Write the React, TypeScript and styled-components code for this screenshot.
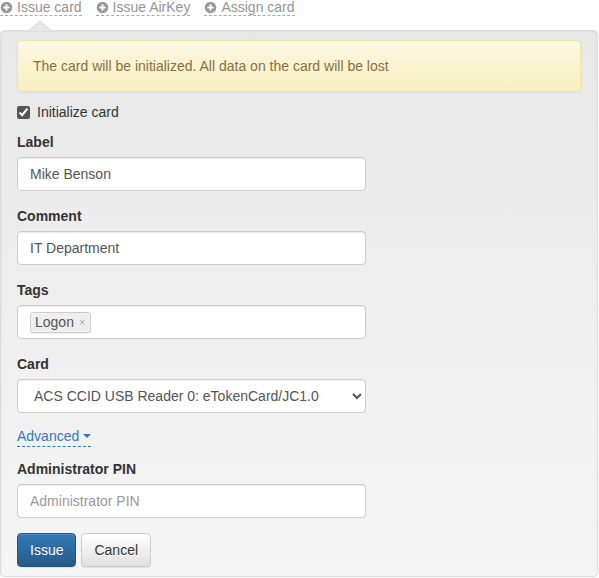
import { useState } from "react";
import styled, { createGlobalStyle } from "styled-components";

const GlobalStyle = createGlobalStyle`
  html, body {
    margin: 0;
    padding: 0;
    background: #fff;
  }
  body {
    font-family: "Liberation Sans", Arial, sans-serif;
    font-size: 14px;
    color: #333;
  }
  * {
    box-sizing: border-box;
  }
`;

const Page = styled.div`
  width: 599px;
  display: flex;
  flex-direction: column;
`;

const TabBar = styled.div`
  display: flex;
  flex-direction: row;
  gap: 14px;
  height: 16px;
`;

const TabLink = styled.a`
  display: flex;
  align-items: center;
  height: 16px;
  line-height: 15px;
  color: #959595;
  text-decoration: none;
  border-bottom: 1px dashed #aaa;
  cursor: pointer;
  svg {
    margin-right: 4px;
    flex-shrink: 0;
  }
`;

const Well = styled.div`
  position: relative;
  margin-top: 14px;
  width: 598px;
  padding: 9px 16px 9px;
  border: 1px solid #dcdcdc;
  border-radius: 4px;
  background-image: linear-gradient(to bottom, #e8e8e8 0%, #f5f5f5 100%);
  box-shadow: inset 0 1px 3px rgba(0, 0, 0, 0.05), 0 1px 0 rgba(255, 255, 255, 0.1);
  &::before {
    content: "";
    position: absolute;
    top: -11px;
    left: 28px;
    border-left: 11px solid transparent;
    border-right: 11px solid transparent;
    border-bottom: 10px solid #dcdcdc;
  }
  &::after {
    content: "";
    position: absolute;
    top: -10px;
    left: 29px;
    border-left: 10px solid transparent;
    border-right: 10px solid transparent;
    border-bottom: 10px solid #e8e8e8;
  }
`;

const Alert = styled.div`
  padding: 15px 15px;
  line-height: 20px;
  border: 1px solid #f5e79e;
  border-radius: 4px;
  color: #8a6d3b;
  background-image: linear-gradient(to bottom, #fcf8e3 0%, #f8efc0 100%);
  text-shadow: 0 1px 0 rgba(255, 255, 255, 0.2);
  box-shadow: inset 0 1px 0 rgba(255, 255, 255, 0.25), 0 1px 2px rgba(0, 0, 0, 0.05);
`;

const CheckRow = styled.label`
  display: flex;
  align-items: center;
  margin-top: 10px;
  height: 20px;
  line-height: 20px;
  cursor: pointer;
  input {
    width: 13px;
    height: 13px;
    margin: 0 7px 0 0;
    accent-color: #555;
  }
`;

const FormGroup = styled.div<{ $mb?: number; $mt?: number }>`
  display: flex;
  flex-direction: column;
  margin-top: ${(p) => p.$mt ?? 0}px;
  margin-bottom: ${(p) => p.$mb ?? 15}px;
`;

const FieldLabel = styled.label`
  font-weight: bold;
  line-height: 20px;
  margin-bottom: 5px;
  color: #333;
`;

const controlBase = `
  width: 349px;
  height: 34px;
  padding: 6px 12px;
  font-family: "Liberation Sans", Arial, sans-serif;
  font-size: 14px;
  line-height: 20px;
  color: #555;
  background-color: #fff;
  border: 1px solid #ccc;
  border-radius: 4px;
  box-shadow: inset 0 1px 1px rgba(0, 0, 0, 0.075);
  outline: none;
`;

const TextInput = styled.input`
  ${controlBase}
  &::placeholder {
    color: #999;
  }
`;

const SelectBox = styled.select`
  ${controlBase}
  padding: 6px 8px 6px 12px;
`;

const TagBox = styled.div`
  ${controlBase}
  display: flex;
  align-items: center;
  padding: 0 12px;
`;

const Tag = styled.span`
  display: inline-flex;
  align-items: center;
  height: 21px;
  padding: 0 5px 0 4px;
  line-height: 19px;
  color: #555;
  background-color: #eee;
  border: 1px solid #ccc;
  border-radius: 3px;
  box-shadow: 0 0 2px #fff inset, 0 1px 0 rgba(0, 0, 0, 0.05);
`;

const TagClose = styled.span`
  margin-left: 5px;
  font-size: 11px;
  color: #aaa;
`;

const AdvancedRow = styled.div`
  display: flex;
  margin-top: -2px;
  margin-bottom: 12px;
`;

const AdvancedLink = styled.a`
  display: flex;
  align-items: center;
  line-height: 20px;
  color: #337ab7;
  text-decoration: none;
  border-bottom: 1px dashed #337ab7;
  cursor: pointer;
`;

const Caret = styled.span`
  display: inline-block;
  width: 0;
  height: 0;
  margin-left: 4px;
  border-top: 4px solid #337ab7;
  border-left: 4px solid transparent;
  border-right: 4px solid transparent;
`;

const ButtonRow = styled.div`
  display: flex;
  gap: 5px;
`;

const Button = styled.button<{ $primary?: boolean }>`
  height: 34px;
  padding: 6px 12px;
  font-family: "Liberation Sans", Arial, sans-serif;
  font-size: 14px;
  line-height: 20px;
  border-radius: 4px;
  cursor: pointer;
  border: 1px solid ${(p) => (p.$primary ? "#245580" : "#ccc")};
  color: ${(p) => (p.$primary ? "#fff" : "#333")};
  background-image: ${(p) =>
    p.$primary
      ? "linear-gradient(to bottom, #337ab7 0%, #265a88 100%)"
      : "linear-gradient(to bottom, #fff 0%, #e0e0e0 100%)"};
  text-shadow: ${(p) =>
    p.$primary ? "0 -1px 0 rgba(0, 0, 0, 0.2)" : "0 1px 0 #fff"};
  box-shadow: inset 0 1px 0 rgba(255, 255, 255, 0.15), 0 1px 1px rgba(0, 0, 0, 0.075);
`;

const PlusIcon = () => (
  <svg width="13" height="13" viewBox="0 0 13 13">
    <circle cx="6.5" cy="6.5" r="5.8" fill="#999" />
    <rect x="3.4" y="5.6" width="6.2" height="1.8" fill="#fff" />
    <rect x="5.6" y="3.4" width="1.8" height="6.2" fill="#fff" />
  </svg>
);

const tabs = ["Issue card", "Issue AirKey", "Assign card"];

export default function App() {
  const [init, setInit] = useState(true);
  const [label, setLabel] = useState("Mike Benson");
  const [comment, setComment] = useState("IT Department");
  const [pin, setPin] = useState("");
  return (
    <Page>
      <GlobalStyle />
      <TabBar>
        {tabs.map((t) => (
          <TabLink key={t}>
            <PlusIcon />
            {t}
          </TabLink>
        ))}
      </TabBar>
      <Well>
        <Alert>The card will be initialized. All data on the card will be lost</Alert>
        <CheckRow>
          <input type="checkbox" checked={init} onChange={(e) => setInit(e.target.checked)} />
          Initialize card
        </CheckRow>
        <FormGroup $mt={10}>
          <FieldLabel>Label</FieldLabel>
          <TextInput value={label} onChange={(e) => setLabel(e.target.value)} />
        </FormGroup>
        <FormGroup>
          <FieldLabel>Comment</FieldLabel>
          <TextInput value={comment} onChange={(e) => setComment(e.target.value)} />
        </FormGroup>
        <FormGroup>
          <FieldLabel>Tags</FieldLabel>
          <TagBox>
            <Tag>
              Logon<TagClose>×</TagClose>
            </Tag>
          </TagBox>
        </FormGroup>
        <FormGroup>
          <FieldLabel>Card</FieldLabel>
          <SelectBox defaultValue="acs">
            <option value="acs">ACS CCID USB Reader 0: eTokenCard/JC1.0</option>
          </SelectBox>
        </FormGroup>
        <AdvancedRow>
          <AdvancedLink>
            Advanced
            <Caret />
          </AdvancedLink>
        </AdvancedRow>
        <FormGroup>
          <FieldLabel>Administrator PIN</FieldLabel>
          <TextInput
            placeholder="Administrator PIN"
            value={pin}
            onChange={(e) => setPin(e.target.value)}
          />
        </FormGroup>
        <ButtonRow>
          <Button $primary>Issue</Button>
          <Button>Cancel</Button>
        </ButtonRow>
      </Well>
    </Page>
  );
}
